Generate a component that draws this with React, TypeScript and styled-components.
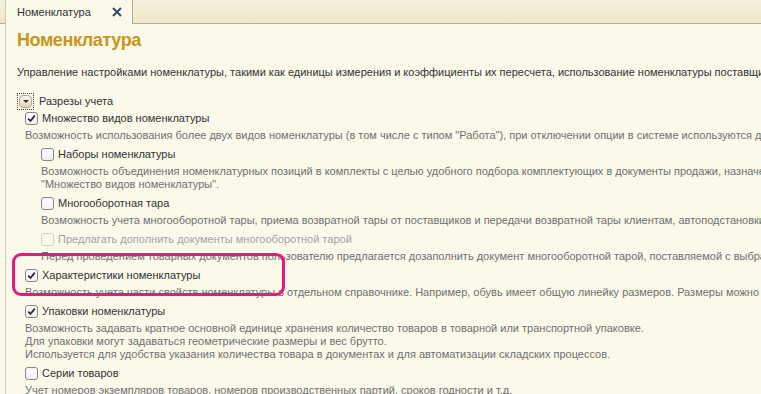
import styled, { createGlobalStyle } from "styled-components"

const GlobalStyle = createGlobalStyle`
    html, body {
        margin: 0;
        padding: 0;
        background: #fbf9ea;
    }
    body {
        font-family: "Liberation Sans", Arial, sans-serif;
    }
`

const Page = styled.div`
    width: 761px;
    height: 394px;
    overflow: hidden;
    display: flex;
    flex-direction: column;
    background: #fbf9ea;
    color: #3a3a3a;
    font-size: 11px;
`
const TabBar = styled.div`
    flex: none;
    height: 23px;
    display: flex;
    padding-left: 5px;
    border-bottom: 1px solid #b4ac8b;
    background: linear-gradient(#f6f1de, #eee7cd);
`
const Tab = styled.div`
    box-sizing: border-box;
    width: 128px;
    height: 24px;
    margin-bottom: -1px;
    padding: 0 10px 1px 11px;
    display: flex;
    align-items: center;
    justify-content: space-between;
    border-left: 1px solid #cfc8ae;
    border-right: 1px solid #b4ac8b;
    background: #fbf9ea;
    color: #333;
    font-size: 11px;
`
const CloseIcon = styled.svg`
    width: 10px;
    height: 10px;
`
const Body = styled.div`
    flex: 1;
    margin-left: 5px;
    padding: 4px 0 0 11px;
    border-left: 1px solid #d6d0b6;
    display: flex;
    flex-direction: column;
`
const Title = styled.h1`
    margin: 0;
    font-size: 18px;
    line-height: 24px;
    letter-spacing: -0.4px;
    font-weight: bold;
    color: #c8951c;
`
const Intro = styled.p`
    margin: 13px 0 0;
    font-size: 11px;
    line-height: 14px;
    white-space: nowrap;
    color: #333;
`
const Tree = styled.div`
    margin-top: 14px;
    display: flex;
    flex-direction: column;
`
const GroupRow = styled.div`
    height: 16px;
    display: flex;
    align-items: center;
    gap: 5px;
    font-size: 11px;
    color: #333;
`
const Focus = styled.span`
    display: flex;
    padding: 1px;
    border: 1px dotted #444;
`
const Toggle = styled.span`
    width: 11px;
    height: 11px;
    border: 1px solid #b3aa8a;
    border-radius: 4px;
    background: linear-gradient(#faf7ec, #ddd5bb);
    display: flex;
    align-items: center;
    justify-content: center;
    &::after {
        content: "";
        border-left: 3px solid transparent;
        border-right: 3px solid transparent;
        border-top: 3px solid #333;
    }
`
const Item = styled.div`
    margin-top: 3px;
    ${GroupRow} + & {
        margin-top: 0;
    }
`
const CheckRow = styled.div<{ $level: number; $disabled?: boolean }>`
    position: relative;
    height: 18px;
    margin-left: ${p => 8 + p.$level * 16}px;
    display: flex;
    align-items: center;
    gap: 4px;
    font-size: 11px;
    white-space: nowrap;
    color: ${p => (p.$disabled ? "#a4a4a4" : "#333")};
`
const Box = styled.span<{ $disabled?: boolean }>`
    box-sizing: border-box;
    width: 13px;
    height: 13px;
    flex: none;
    border: 1px solid ${p => (p.$disabled ? "#d4d1c4" : "#878787")};
    border-radius: 3px;
    background: ${p => (p.$disabled ? "transparent" : "linear-gradient(#ffffff, #f1f1f1)")};
    display: flex;
    align-items: center;
    justify-content: center;
`
const Desc = styled.div<{ $level: number }>`
    margin-left: ${p => 8 + p.$level * 16}px;
    font-size: 11px;
    line-height: 13px;
    white-space: nowrap;
    color: #707070;
    &:nth-child(2) {
        margin-top: 2px;
    }
`
const Highlight = styled.span`
    position: absolute;
    left: -13px;
    top: -13px;
    width: 273px;
    height: 43px;
    box-sizing: border-box;
    border: 3px solid #e8197d;
    border-radius: 9px;
    pointer-events: none;
    z-index: 2;
`

const Check = ({ checked, disabled }: { checked?: boolean; disabled?: boolean }) => (
    <Box $disabled={disabled}>
        {checked && (
            <svg width="9" height="9" viewBox="0 0 9 9">
                <path d="M1.2 4.6 L3.5 7 L7.8 1.6" fill="none" stroke="#2b2b2b" strokeWidth="1.8" />
            </svg>
        )}
    </Box>
)

type Option = {
    label: string
    level: number
    checked?: boolean
    disabled?: boolean
    marked?: boolean
    desc: string[]
}

const options: Option[] = [
    {
        label: "Множество видов номенклатуры",
        level: 0,
        checked: true,
        desc: ["Возможность использования более двух видов номенклатуры (в том числе с типом \"Работа\"), при отключении опции в системе используются два вида номенклатуры: товар и услуга."],
    },
    {
        label: "Наборы номенклатуры",
        level: 1,
        desc: [
            "Возможность объединения номенклатурных позиций в комплекты с целью удобного подбора комплектующих в документы продажи, назначения цен и скидок. Опция доступна при включенной опции",
            "\"Множество видов номенклатуры\".",
        ],
    },
    {
        label: "Многооборотная тара",
        level: 1,
        desc: ["Возможность учета многооборотной тары, приема возвратной тары от поставщиков и передачи возвратной тары клиентам, автоподстановки тары в документы."],
    },
    {
        label: "Предлагать дополнить документы многооборотной тарой",
        level: 1,
        disabled: true,
        desc: ["Перед проведением товарных документов пользователю предлагается дозаполнить документ многооборотной тарой, поставляемой с выбранной номенклатурой."],
    },
    {
        label: "Характеристики номенклатуры",
        level: 0,
        checked: true,
        marked: true,
        desc: ["Возможность учета части свойств номенклатуры в отдельном справочнике. Например, обувь имеет общую линейку размеров. Размеры можно вынести в характеристики."],
    },
    {
        label: "Упаковки номенклатуры",
        level: 0,
        checked: true,
        desc: [
            "Возможность задавать кратное основной единице хранения количество товаров в товарной или транспортной упаковке.",
            "Для упаковки могут задаваться геометрические размеры и вес брутто.",
            "Используется для удобства указания количества товара в документах и для автоматизации складских процессов.",
        ],
    },
    {
        label: "Серии товаров",
        level: 0,
        desc: ["Учет номеров экземпляров товаров, номеров производственных партий, сроков годности и т.д."],
    },
]

export default function App() {
    return (
        <Page>
            <GlobalStyle />
            <TabBar>
                <Tab>
                    <span>Номенклатура</span>
                    <CloseIcon viewBox="0 0 10 10">
                        <path d="M1 1 L9 9 M9 1 L1 9" stroke="#2a4e70" strokeWidth="2" />
                    </CloseIcon>
                </Tab>
            </TabBar>
            <Body>
                <Title>Номенклатура</Title>
                <Intro>
                    Управление настройками номенклатуры, такими как единицы измерения и коэффициенты их пересчета, использование номенклатуры поставщиков и т.д.
                </Intro>
                <Tree>
                    <GroupRow>
                        <Focus>
                            <Toggle />
                        </Focus>
                        Разрезы учета
                    </GroupRow>
                    {options.map(o => (
                        <Item key={o.label}>
                            <CheckRow $level={o.level} $disabled={o.disabled}>
                                <Check checked={o.checked} disabled={o.disabled} />
                                {o.label}
                                {o.marked && <Highlight />}
                            </CheckRow>
                            {o.desc.map(line => (
                                <Desc key={line} $level={o.level}>
                                    {line}
                                </Desc>
                            ))}
                        </Item>
                    ))}
                </Tree>
            </Body>
        </Page>
    )
}
